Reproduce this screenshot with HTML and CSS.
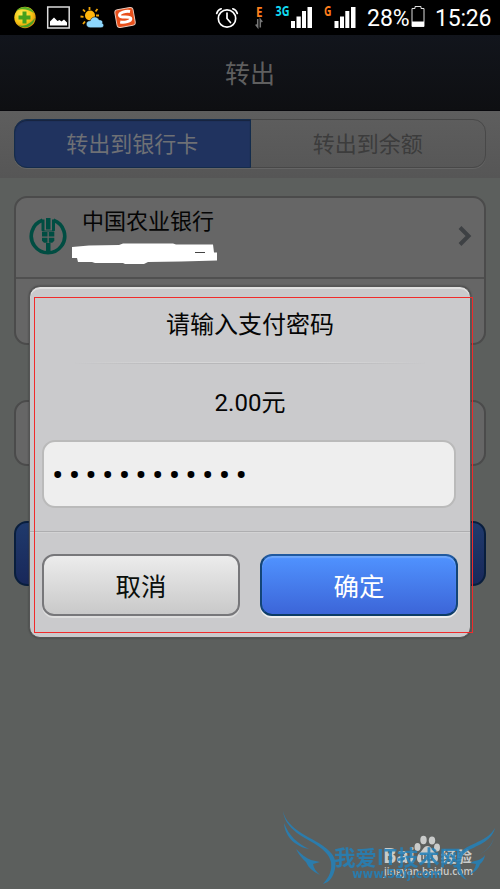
FILE: index.html
```html
<!DOCTYPE html>
<html lang="zh-CN">
<head>
  <meta charset="UTF-8" />
  <meta name="viewport" content="width=device-width, initial-scale=1.0"/>
  <title>转出</title>
  <link rel="stylesheet" href="styles.css">
</head>
<body>
  <div class="status-bar">
    <svg class="tray" width="130" height="35" viewBox="0 0 130 35">
      <defs>
        <radialGradient id="ball" cx="40%" cy="35%" r="65%">
          <stop offset="0" stop-color="#fff45a"/>
          <stop offset="0.65" stop-color="#f5c414"/>
          <stop offset="1" stop-color="#d98d0a"/>
        </radialGradient>
      </defs>
      <!-- shield ball -->
      <circle cx="17" cy="17.500" r="10.700" fill="url(#ball)"/>
      <path d="M8 11C13 5 23 6 26 13C20 9 13 8 8 11Z" fill="#58ad25"/>
      <path d="M10 25C15 27 21 25 27 18C26 25 18 31 10 25Z" fill="#4fa020"/>
      <path d="M14.500 11.500h4v4h4v4h-4v4h-4v-4h-4v-4h4z" fill="#45a01c"/>
      <!-- gallery -->
      <rect x="39.700" y="7" width="21.500" height="21" fill="#000" stroke="#dcdcdc" stroke-width="1.500"/>
      <path d="M42 25.500v-4l4-4l3.500 3.500l2-1l2 1.500l2.500-2l3 3v3z" fill="#fff"/>
      <!-- weather -->
      <g stroke="#f0a508" stroke-width="1.800">
        <path d="M81.500 7v3M75 9.500l2 2.200M89.500 9l-2 2.500M72.500 16.500l3 .3M75 24l2-2.500M91 15.500h-3"/>
      </g>
      <circle cx="82" cy="15.500" r="5" fill="#ffb60d"/>
      <path d="M82 27.700c-5-.5-5-7 .3-7c1-4.500 7-5 8.700-1c4 0 4 3 3.300 3.600c2.500 1.200 1.500 4.400-1.300 4.400z" fill="#8dd6fb" stroke="#000" stroke-width="0.500"/>
      <!-- input method -->
      <g transform="rotate(-10 117 17.500)">
        <rect x="107.800" y="8.500" width="18.500" height="18" rx="3" fill="#e9501b" stroke="#e8c6b8"/>
        <path d="M123 12.500c-4-1.500-11-1-11 2c0 3.300 10.500 2 10.500 5c0 3-7 3-11 1.500" fill="none" stroke="#fff" stroke-width="3"/>
      </g>
    </svg>
    <svg class="signals" width="146" height="35" viewBox="0 0 146 35">
      <!-- alarm -->
      <g fill="none" stroke="#fff" stroke-width="1.700" stroke-linecap="round">
        <circle cx="13" cy="18.500" r="8.700"/>
        <path d="M13 13v5.500l3.500 4M2.700 13.500c.5-2 2.300-4 4.500-4.700M23.300 13.500c-.5-2-2.300-4-4.500-4.700"/>
      </g>
      <text class="net" x="42" y="17" textLength="6.500" lengthAdjust="spacingAndGlyphs" fill="#ff7f1d">E</text>
      <path d="M43.700 19v8l-2-2.500M46.300 27.500v-8l2 2.500" fill="none" stroke="#777" stroke-width="1.500"/>
      <text class="net" x="61.500" y="16" textLength="14" lengthAdjust="spacingAndGlyphs" fill="#12dcf2">3G</text>
      <path d="M77 21h4v7h-4zM82.500 16.500h4.300v11.500h-4.300zM88 11h4v17h-4zM93.500 7h4.500v21h-4.500z" fill="#fff"/>
      <text class="net" x="110" y="16" textLength="7.500" lengthAdjust="spacingAndGlyphs" fill="#ff7f1d">G</text>
      <path d="M120.500 21h4v7h-4zM126 16.500h4v11.500h-4zM131.300 11h4v17h-4zM137 7h4.500v21h-4.500z" fill="#fff"/>
    </svg>
    <span class="percent">28%</span>
    <svg class="battery" width="14" height="22" viewBox="0 0 14 22">
      <path d="M1 2.500h3v-2h6v2h3v18h-12z" fill="none" stroke="#ddd"/>
      <path d="M1 15.500h12v5h-12z" fill="#fff"/>
    </svg>
    <span class="time">15:26</span>
  </div>

  <header class="title-bar">转出</header>

  <div class="tab-bar">
    <div class="tabs">
      <div class="tab active">转出到银行卡</div>
      <div class="tab">转出到余额</div>
    </div>
  </div>

  <main>
    <section class="card bank-card">
      <div class="bank-row">
        <svg class="bank-logo" width="38" height="38" viewBox="0 0 38 38">
          <path d="M13.500 3.300A16.700 16.700 0 1 0 24.500 3.300" fill="none" stroke="#004d42" stroke-width="3.600"/>
          <path d="M17 1h4.500v11.500h-4.500zM12.500 2.500h3v11h7.500v-11h3v11l-1 1h-11.500l-1-1zM13 15h5.500v4.500h-5.500zM19.800 15h5.500v4.500h-5.500zM13 20.700h5.500v5h-3.500l-2-2zM19.800 20.700h5.500v3l-2 2h-3.500zM17 26h4.500v10h-4.500z" fill="#004d42"/>
        </svg>
        <div class="bank-info">
          <div class="bank-name">中国农业银行</div>
          <svg class="scribble" width="146" height="22" viewBox="0 0 146 22">
            <path d="M0 4l17-1.500l30-.5l4-1.500h50l3 1h37l1 8h3v8l-36 1l-33 .5l-4 2h-19l-2-1H23l-3-1H6l-1-4H0z" fill="#fff"/>
            <path d="M123 9.500h10" stroke="#444"/>
          </svg>
        </div>
        <svg class="arrow" width="14" height="22" viewBox="0 0 14 22">
          <path d="M2 2.500l8.500 8.500l-8.500 8.500" fill="none" stroke="#3e4144" stroke-width="4"/>
        </svg>
      </div>
    </section>
    <section class="card amount-card"></section>
    <div class="submit"></div>
  </main>

  <div class="dialog">
    <h2>请输入支付密码</h2>
    <div class="rule"></div>
    <div class="amount">2.00元</div>
    <div class="password">••••••••••••</div>
    <div class="actions">
      <button class="cancel">取消</button>
      <button class="confirm">确定</button>
    </div>
  </div>
  <div class="highlight"></div>

  <svg class="watermark" width="230" height="89" viewBox="0 0 230 89">
    <g fill="#c9cbca">
      <text x="113" y="63" class="baidu" textLength="32" lengthAdjust="spacingAndGlyphs">Bai</text>
      <text x="171" y="62" class="exp" textLength="31" lengthAdjust="spacingAndGlyphs">经验</text>
      <text x="114" y="75" class="url" textLength="89" lengthAdjust="spacingAndGlyphs">jingyan.baidu.com</text>
      <ellipse cx="147.500" cy="47" rx="3" ry="4"/>
      <ellipse cx="153.500" cy="40" rx="3.200" ry="4.200"/>
      <ellipse cx="162" cy="40.500" rx="3.200" ry="4"/>
      <ellipse cx="167" cy="47.500" rx="3" ry="4"/>
      <path d="M157.500 46c4 0 5 5 8 7c4 4 3 10-2 10h-12c-5 0-6-6-2-10c3-2 4-7 8-7z"/>
    </g>
    <path d="M152 55v5h3v-6M158 54v6h4v-6" fill="none" stroke="#5c5f5d" stroke-width="1.500"/>
    <g class="wings">
      <path d="M13 11C17 31 45 38 57 49C64 55 67 61 65 69C63 77 60 82 53 84C60 76 62 70 61 62C58 48 38 41 27 33C18 26 14 19 13 11Z"/>
      <path d="M14 23C19 36 27 43 39 49C27 47 15 38 14 23Z"/>
      <path d="M26 49C31 54 36 58 41 60L50 62L43 64Q44 70 50 75Q39 70 36 62Q30 57 26 49Z"/>
      <path d="M225 28C221 43 206 45 196 52C188 58 189 72 197 80C188 77 184 65 188 56C194 43 216 44 225 28Z"/>
      <path d="M224 38C221 48 214 54 204 56C214 54 220 48 224 38Z"/>
      <path d="M215 55C211 61 205 60 200 63L206 64Q205 70 199 75Q208 71 210 64Q214 61 215 55Z"/>
      <text x="64" y="65" class="site" textLength="127" lengthAdjust="spacingAndGlyphs">我爱IT技术网</text>
      <text x="82" y="78" class="site-url" textLength="90" lengthAdjust="spacingAndGlyphs">www.52ij.com</text>
    </g>
  </svg>
</body>
</html>
```
FILE: styles.css
```css
* {
  box-sizing: border-box;
}

body {
  margin: 0;
  width: 500px;
  height: 889px;
  overflow: hidden;
  position: relative;
  background: #5c5f5d;
  font-family: Roboto, "Noto Sans CJK SC", sans-serif;
}

svg {
  display: block;
  flex: none;
}

.status-bar {
  display: flex;
  height: 35px;
  padding-left: 8px;
  background: #000;
  color: #fff;
  font-size: 24px;
  line-height: 37px;
}

.signals {
  margin-left: 76px;
}

.net {
  font: bold 13.5px "Open Sans", sans-serif;
}

.percent {
  width: 44px;
  margin-left: 7px;
  font-size: 23px;
}

.battery {
  margin-top: 6px;
}

.time {
  margin-left: 10px;
  font-size: 23px;
  letter-spacing: -0.2px;
}

.title-bar {
  height: 76px;
  border-bottom: 1px solid #08080c;
  background: linear-gradient(#12151c, #0e0f12);
  color: #5f5f5f;
  font-size: 25px;
  line-height: 79px;
  text-align: center;
}

.tab-bar {
  height: 67px;
  padding: 8px 14px 0;
  background: linear-gradient(#5e5e5e, #565656);
}

.tabs {
  display: flex;
  height: 49px;
  border: 1px solid #484848;
  border-radius: 13px;
  box-shadow: 0 1px 0 #656565;
}

.tab {
  flex: 1;
  color: #3c3c3c;
  font-size: 22px;
  line-height: 49px;
  text-align: center;
}

.tab.active {
  margin: -1px 0 -1px -1px;
  border: 1px solid #142c4c;
  border-radius: 13px 0 0 13px;
  background: #20335f;
  color: #6e7075;
  box-shadow: inset 0 1px 1px #17233e;
}

main {
  padding: 18px 14px 0;
}

.card {
  border: 2px solid #4b4b4b;
  border-radius: 13px;
  background: #666;
}

.bank-card {
  height: 149px;
}

.bank-row {
  display: flex;
  height: 81px;
  padding-left: 13px;
  border-bottom: 2px solid #505050;
}

.bank-logo {
  margin-top: 19px;
}

.bank-info {
  flex: 1;
  margin-left: 5px;
}

.bank-name {
  height: 45px;
  padding-left: 10px;
  color: #050505;
  font-size: 22px;
  line-height: 48px;
}

.arrow {
  margin: 27px 12px 0 0;
}

.amount-card {
  height: 66px;
  margin-top: 55px;
}

.submit {
  height: 65px;
  margin-top: 55px;
  border: 2px solid #091e3d;
  border-radius: 13px;
  background: linear-gradient(#203a6c, #18285a);
}

.dialog {
  position: absolute;
  left: 29px;
  top: 286px;
  width: 442px;
  height: 352px;
  border: 1px solid #555;
  border-radius: 11px;
  background: #cacacc;
  box-shadow: inset 0 2px 0 #e0e0e0, 0 0 2px #353535;
  color: #050505;
  text-align: center;
}

.dialog h2 {
  height: 75px;
  margin: 0;
  font-size: 24px;
  font-weight: normal;
  line-height: 77px;
}

.rule {
  height: 2px;
  margin: 0 44px;
  background: linear-gradient(#d6d6d7 50%, #b8b8ba 50%);
  -webkit-mask-image: linear-gradient(90deg, transparent, #000 30%, #000 70%, transparent);
  mask-image: linear-gradient(90deg, transparent, #000 30%, #000 70%, transparent);
}

.amount {
  height: 76px;
  font-size: 24px;
  line-height: 79px;
}

.password {
  height: 68px;
  margin: 0 14px 0 12px;
  padding-left: 8px;
  border: 2px solid #bababa;
  border-radius: 13px;
  background: #eee;
  color: #000;
  font-size: 34px;
  letter-spacing: 5.2px;
  line-height: 67px;
  text-align: left;
}

.actions {
  display: flex;
  gap: 20px;
  margin-top: 23px;
  padding: 22px 12px 0;
  border-top: 1px solid #aeaeb0;
  box-shadow: inset 0 1px 0 #d3d3d4;
}

.actions button {
  flex: 1;
  height: 62px;
  padding: 0 0 2px;
  border: 2px solid #77777a;
  border-radius: 12px;
  font-family: inherit;
  font-size: 25.5px;
  cursor: pointer;
}

.actions .cancel {
  background: linear-gradient(#ececec, #c9c9c9);
  box-shadow: 0 2px 0 #dedede;
  color: #0b0f0b;
}

.actions .confirm {
  border-color: #20599f #134577 #0c3c66;
  background: linear-gradient(#5093ff, #3c65d8);
  box-shadow: 0 2px 0 #eee, inset 0 2px 1px #6da6fb;
  color: #fff;
}

.highlight {
  position: absolute;
  left: 34px;
  top: 297px;
  width: 439px;
  height: 336px;
  border: 1px solid #f02b2b;
}

.watermark {
  position: absolute;
  left: 270px;
  top: 800px;
}

.baidu {
  font: bold 21px "Open Sans", sans-serif;
}

.exp {
  font: bold 15px "Noto Sans CJK SC", sans-serif;
}

.url {
  font: 600 11px "Open Sans", sans-serif;
}

.wings {
  fill: #2580b8;
  opacity: 0.88;
}

.site {
  font: bold 21px "Noto Sans CJK SC", sans-serif;
}

.site-url {
  font: bold 12px "DejaVu Sans", sans-serif;
}
```
